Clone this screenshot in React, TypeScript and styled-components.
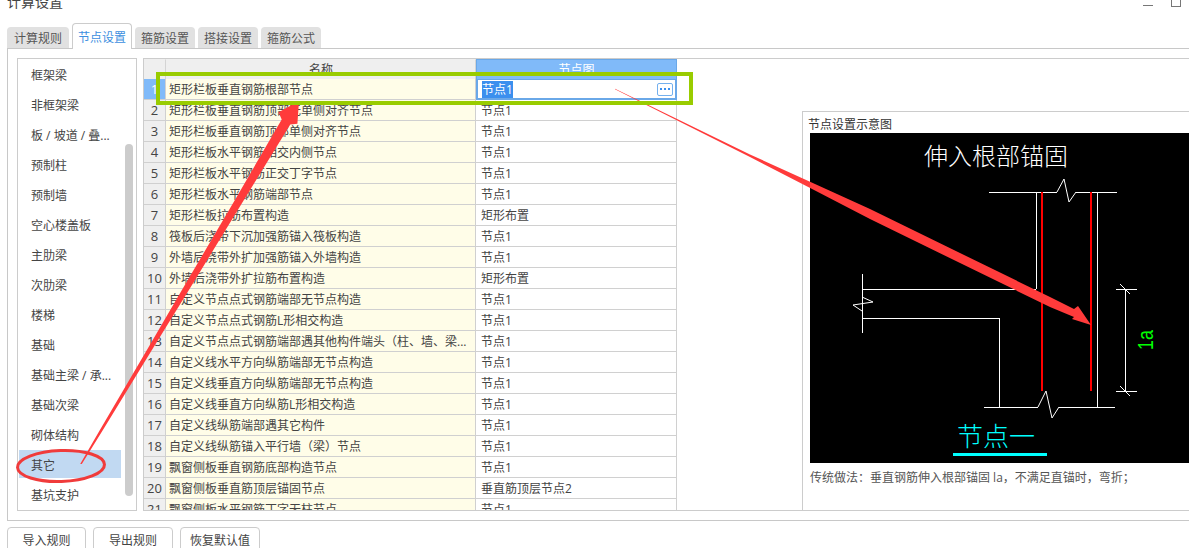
import { FC } from "react";
import styled, { createGlobalStyle } from "styled-components";

const GlobalStyle = createGlobalStyle`
  html, body {
    margin: 0;
    padding: 0;
    background: #fff;
    overflow: hidden;
  }
  body {
    font-family: "Open Sans", "Noto Sans CJK SC", sans-serif;
    font-size: 12px;
    color: #333;
  }
`;

const Page = styled.div`
  position: relative;
  width: 1189px;
  height: 548px;
  overflow: hidden;
  display: flex;
  flex-direction: column;
`;

const TitleBar = styled.div`
  height: 23px;
  flex: none;
  padding: 0 8px 0 7px;
  display: flex;
  justify-content: space-between;
  overflow: hidden;
`;

const Title = styled.div`
  margin-top: -7px;
  line-height: 18px;
  font-size: 14px;
  color: #444;
`;

const WindowButtons = styled.div`
  display: flex;
  gap: 18px;
`;

const Minimize = styled.span`
  display: block;
  width: 10px;
  height: 1px;
  margin-top: 5px;
  background: #777;
`;

const Maximize = styled.span`
  display: block;
  box-sizing: border-box;
  width: 10px;
  height: 7px;
  border: 1px solid #777;
  border-top: 0;
`;

const Tabs = styled.div`
  display: flex;
  align-items: flex-end;
  gap: 3px;
  height: 26px;
  padding-left: 7px;
  flex: none;
  position: relative;
  z-index: 1;
`;

const Tab = styled.div<{ $active?: boolean }>`
  box-sizing: border-box;
  width: 60px;
  height: ${(p) => (p.$active ? "26px" : "21px")};
  margin-bottom: ${(p) => (p.$active ? "0" : "1px")};
  display: flex;
  align-items: center;
  justify-content: center;
  border-radius: 4px 4px 0 0;
  background: ${(p) => (p.$active ? "#fff" : "#e1e1e1")};
  border: ${(p) => (p.$active ? "1px solid #ccc" : "0")};
  border-bottom: 0;
  color: ${(p) => (p.$active ? "#3d8fe0" : "#555")};

  &:first-child {
    width: 62px;
  }
`;

const Panel = styled.div`
  box-sizing: border-box;
  height: 473px;
  margin: -1px 0 0 7px;
  padding: 9px 0 9px 9px;
  border: 1px solid #c8c8c8;
  border-right: 0;
  display: flex;
  gap: 6px;
  flex: none;
`;

const List = styled.div`
  position: relative;
  box-sizing: border-box;
  width: 120px;
  height: 453px;
  padding-top: 1px;
  border: 1px solid #ccc;
  flex: none;
`;

const ListItem = styled.div<{ $selected?: boolean }>`
  height: 28px;
  margin: 0 15px 2px 1px;
  padding-left: 12px;
  line-height: 32px;
  color: #444;
  background: ${(p) => (p.$selected ? "#c1d9f2" : "transparent")};
`;

const ScrollThumb = styled.div`
  position: absolute;
  top: 85px;
  right: 3px;
  width: 8px;
  height: 352px;
  border-radius: 4px;
  background: #ccc;
`;

const Content = styled.div`
  box-sizing: border-box;
  flex: 1;
  height: 453px;
  min-width: 0;
  border: 1px solid #ccc;
  border-right: 0;
  display: flex;
`;

const Grid = styled.div`
  width: 534px;
  flex: none;
  overflow: hidden;
`;

const Row = styled.div<{ $head?: boolean }>`
  display: grid;
  grid-template-columns: 22px 310px 201px;
  grid-template-rows: 100%;
  height: ${(p) => (p.$head ? "20px" : "21px")};
`;

const HeadCell = styled.div<{ $active?: boolean }>`
  box-sizing: border-box;
  text-align: center;
  line-height: 19px;
  background: ${(p) => (p.$active ? "#80baf9" : "#efefef")};
  color: ${(p) => (p.$active ? "#fff" : "#444")};
  border: 1px solid ${(p) => (p.$active ? "#6aa8e8" : "#efefef")};
  border-bottom: 0;
  border-right-color: ${(p) => (p.$active ? "#6aa8e8" : "#d4d4d4")};
`;

const NumCell = styled.div<{ $current?: boolean }>`
  box-sizing: border-box;
  text-align: center;
  font-size: 13px;
  line-height: 21px;
  background: ${(p) => (p.$current ? "#80baf9" : "#efefef")};
  color: ${(p) => (p.$current ? "#fff" : "#444")};
  border-bottom: 1px solid #d0d0d0;
  border-right: 1px solid #d0d0d0;
`;

const NameCell = styled.div`
  box-sizing: border-box;
  padding-left: 3px;
  line-height: 21px;
  white-space: nowrap;
  overflow: hidden;
  color: #444;
  background: #fffde8;
  border-bottom: 1px solid #d0d0d0;
  border-right: 1px solid #d0d0d0;
`;

const ValueCell = styled.div`
  box-sizing: border-box;
  padding-left: 5px;
  line-height: 21px;
  white-space: nowrap;
  color: #444;
  border-bottom: 1px solid #d0d0d0;
  border-right: 1px solid #d0d0d0;
`;

const EditCell = styled.div`
  box-sizing: border-box;
  display: flex;
  align-items: center;
  justify-content: space-between;
  padding: 0 2px 0 4px;
  border: 2px solid #6aa8e8;
  border-top-width: 1px;
`;

const Selection = styled.span`
  background: #3b8fee;
  color: #fff;
  line-height: 17px;
`;

const MoreButton = styled.span`
  box-sizing: border-box;
  width: 16px;
  height: 13px;
  display: flex;
  align-items: center;
  justify-content: center;
  gap: 2px;
  border: 1px solid #74b0ee;
  border-radius: 2px;

  i {
    display: block;
    width: 2px;
    height: 2px;
    background: #3b8fee;
  }
`;

const Preview = styled.div`
  box-sizing: border-box;
  flex: none;
  width: 387px;
  margin: 52px 0 0 124px;
  border: 1px solid #ccc;
  border-width: 1px 0 0 1px;
`;

const PreviewLabel = styled.div`
  height: 21px;
  padding: 1px 0 0 5px;
  box-sizing: border-box;
  line-height: 24px;
  color: #333;
`;

const Canvas = styled.svg`
  display: block;
  width: 379px;
  height: 330px;
  margin-left: 7px;
  background: #000;
`;

const Caption = styled.div`
  margin: 5px 0 0 7px;
  line-height: 20px;
  color: #555;
`;

const Footer = styled.div`
  display: flex;
  gap: 7px;
  padding: 6px 0 0 7px;
`;

const Button = styled.button`
  box-sizing: border-box;
  width: 79px;
  height: 30px;
  padding: 0 0 4px;
  border: 1px solid #ccc;
  border-radius: 4px;
  background: #fff;
  font: inherit;
  font-size: 12px;
  color: #444;

  & + & {
    width: 80px;
  }
`;

const Annotations = styled.svg`
  position: absolute;
  top: 0;
  left: 0;
  width: 1189px;
  height: 548px;
  pointer-events: none;
`;

const categories = [
  "框架梁",
  "非框架梁",
  "板 / 坡道 / 叠...",
  "预制柱",
  "预制墙",
  "空心楼盖板",
  "主肋梁",
  "次肋梁",
  "楼梯",
  "基础",
  "基础主梁 / 承...",
  "基础次梁",
  "砌体结构",
  "其它",
  "基坑支护",
];

const rules: [string, string][] = [
  ["矩形栏板垂直钢筋根部节点", "节点1"],
  ["矩形栏板垂直钢筋顶部无单侧对齐节点", "节点1"],
  ["矩形栏板垂直钢筋顶部单侧对齐节点", "节点1"],
  ["矩形栏板水平钢筋相交内侧节点", "节点1"],
  ["矩形栏板水平钢筋正交丁字节点", "节点1"],
  ["矩形栏板水平钢筋端部节点", "节点1"],
  ["矩形栏板拉筋布置构造", "矩形布置"],
  ["筏板后浇带下沉加强筋锚入筏板构造", "节点1"],
  ["外墙后浇带外扩加强筋锚入外墙构造", "节点1"],
  ["外墙后浇带外扩拉筋布置构造", "矩形布置"],
  ["自定义节点点式钢筋端部无节点构造", "节点1"],
  ["自定义节点点式钢筋L形相交构造", "节点1"],
  ["自定义节点点式钢筋端部遇其他构件端头（柱、墙、梁...", "节点1"],
  ["自定义线水平方向纵筋端部无节点构造", "节点1"],
  ["自定义线垂直方向纵筋端部无节点构造", "节点1"],
  ["自定义线垂直方向纵筋L形相交构造", "节点1"],
  ["自定义线纵筋端部遇其它构件", "节点1"],
  ["自定义线纵筋锚入平行墙（梁）节点", "节点1"],
  ["飘窗侧板垂直钢筋底部构造节点", "节点1"],
  ["飘窗侧板垂直筋顶层锚固节点", "垂直筋顶层节点2"],
  ["飘窗侧板水平钢筋丁字无柱节点", "节点1"],
];

const tabs = ["计算规则", "节点设置", "箍筋设置", "搭接设置", "箍筋公式"];

// page coordinates, so the numbers read straight off the screenshot
const NodeDrawing: FC = () => (
  <Canvas viewBox="810 133 379 330">
    <g stroke="#fff" strokeWidth="1" fill="none" shapeRendering="crispEdges">
      <path d="M989 192.5H1057M1076 192.5H1117" />
      <path d="M1036.5 192V289M1097.5 192V407" />
      <path d="M862 289.5H1036M862.5 274V333M862 318.5H999.5V407" />
      <path d="M984 407.5H1038M1059 407.5H1115" />
      <path d="M1125.5 289V391M1116 289.5H1137M1116 391.5H1137" />
    </g>
    <g stroke="#fff" strokeWidth="1" fill="none">
      <path d="M1057 192L1064 179L1069 202L1076 192" />
      <path d="M862 297L873 302L853 305L862 311" />
      <path d="M1038 407L1046 391L1052 418L1059 407" />
      <path d="M1120 284L1130 294M1120 386L1130 396" />
    </g>
    <path
      d="M1042 192V391M1091 192V391"
      stroke="#f00"
      strokeWidth="2"
      fill="none"
    />
    <text
      x="996"
      y="165"
      fill="#fff"
      fontSize="24"
      fontWeight="200"
      textAnchor="middle"
      fontFamily="'Noto Sans CJK SC', sans-serif"
    >
      伸入根部锚固
    </text>
    <text
      x="996"
      y="446"
      fill="#0ff"
      fontSize="26"
      fontWeight="200"
      textAnchor="middle"
      fontFamily="'Noto Sans CJK SC', sans-serif"
    >
      节点一
    </text>
    <rect x="953" y="453" width="94" height="3" fill="#0ff" />
    <text
      x="1153"
      y="340"
      fill="#0f0"
      fontSize="22"
      textAnchor="middle"
      textLength="20"
      lengthAdjust="spacingAndGlyphs"
      transform="rotate(-90 1153 340)"
      fontFamily="'Liberation Sans', sans-serif"
    >
      1a
    </text>
  </Canvas>
);

const App: FC = () => {
  return (
    <Page>
      <GlobalStyle />
      <TitleBar>
        <Title>计算设置</Title>
        <WindowButtons>
          <Minimize />
          <Maximize />
        </WindowButtons>
      </TitleBar>
      <Tabs>
        {tabs.map((tab, i) => (
          <Tab key={tab} $active={i === 1}>
            {tab}
          </Tab>
        ))}
      </Tabs>
      <Panel>
        <List>
          {categories.map((name) => (
            <ListItem key={name} $selected={name === "其它"}>
              {name}
            </ListItem>
          ))}
          <ScrollThumb />
        </List>
        <Content>
          <Grid>
            <Row $head>
              <HeadCell />
              <HeadCell>名称</HeadCell>
              <HeadCell $active>节点图</HeadCell>
            </Row>
            {rules.map(([name, value], i) => (
              <Row key={name}>
                <NumCell $current={i === 0}>{i + 1}</NumCell>
                <NameCell>{name}</NameCell>
                {i === 0 ? (
                  <EditCell>
                    <Selection>{value}</Selection>
                    <MoreButton>
                      <i />
                      <i />
                      <i />
                    </MoreButton>
                  </EditCell>
                ) : (
                  <ValueCell>{value}</ValueCell>
                )}
              </Row>
            ))}
          </Grid>
          <Preview>
            <PreviewLabel>节点设置示意图</PreviewLabel>
            <NodeDrawing />
            <Caption>
              传统做法：垂直钢筋伸入根部锚固 la，不满足直锚时，弯折；
            </Caption>
          </Preview>
        </Content>
      </Panel>
      <Footer>
        <Button>导入规则</Button>
        <Button>导出规则</Button>
        <Button>恢复默认值</Button>
      </Footer>
      <Annotations viewBox="0 0 1189 548">
        <polygon
          points="80.2,464 99.9,430 146.9,350 181.9,290 234.9,200 281.7,119.4 278.6,112.3 299,101 297.4,123.7 290.3,124.6 243.9,200 188.9,290 151.9,350 102.9,430 81.8,464"
          fill="#ff3b3b"
        />
        <polygon
          points="615,88.7 750,154.5 815,184 870,209 1050,297 1074,309 1078,306 1091,325 1072,319 1074,317 1050,307 870,219 815,190.5 750,157 615,89.3"
          fill="#ff3b3b"
        />
        <ellipse
          cx="61"
          cy="466"
          rx="43.5"
          ry="15.5"
          fill="none"
          stroke="#f03b3b"
          strokeWidth="3"
          transform="rotate(-2 61 466)"
        />
        <rect
          x="158"
          y="74"
          width="533"
          height="29"
          fill="none"
          stroke="#99cc00"
          strokeWidth="4"
        />
      </Annotations>
    </Page>
  );
};

export default App;
